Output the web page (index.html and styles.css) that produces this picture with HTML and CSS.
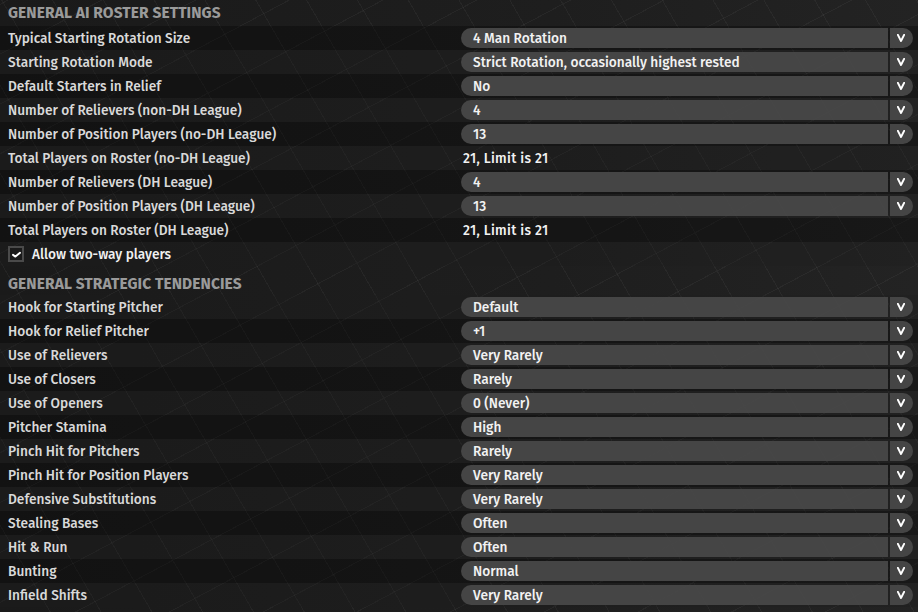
FILE: index.html
```html
<!DOCTYPE html>
<html>
<head>
<meta charset="utf-8">
<link rel="stylesheet" href="styles.css">
</head>
<body>
<div class="page">
  <div class="section-title">General AI Roster Settings</div>
  <div class="rows">
    <div class="row"><div class="label">Typical Starting Rotation Size</div><div class="select"><span class="val">4 Man Rotation</span><span class="arrow"><svg viewBox="0 0 8 8" width="8" height="8"><polyline points="0.8,0.8 4,7 7.2,0.8"/></svg></span></div></div>
    <div class="row"><div class="label">Starting Rotation Mode</div><div class="select"><span class="val">Strict Rotation, occasionally highest rested</span><span class="arrow"><svg viewBox="0 0 8 8" width="8" height="8"><polyline points="0.8,0.8 4,7 7.2,0.8"/></svg></span></div></div>
    <div class="row"><div class="label">Default Starters in Relief</div><div class="select"><span class="val">No</span><span class="arrow"><svg viewBox="0 0 8 8" width="8" height="8"><polyline points="0.8,0.8 4,7 7.2,0.8"/></svg></span></div></div>
    <div class="row"><div class="label">Number of Relievers (non-DH League)</div><div class="select"><span class="val">4</span><span class="arrow"><svg viewBox="0 0 8 8" width="8" height="8"><polyline points="0.8,0.8 4,7 7.2,0.8"/></svg></span></div></div>
    <div class="row"><div class="label">Number of Position Players (no-DH League)</div><div class="select"><span class="val">13</span><span class="arrow"><svg viewBox="0 0 8 8" width="8" height="8"><polyline points="0.8,0.8 4,7 7.2,0.8"/></svg></span></div></div>
    <div class="row"><div class="label">Total Players on Roster (no-DH League)</div><div class="static">21, Limit is 21</div></div>
    <div class="row"><div class="label">Number of Relievers (DH League)</div><div class="select"><span class="val">4</span><span class="arrow"><svg viewBox="0 0 8 8" width="8" height="8"><polyline points="0.8,0.8 4,7 7.2,0.8"/></svg></span></div></div>
    <div class="row"><div class="label">Number of Position Players (DH League)</div><div class="select"><span class="val">13</span><span class="arrow"><svg viewBox="0 0 8 8" width="8" height="8"><polyline points="0.8,0.8 4,7 7.2,0.8"/></svg></span></div></div>
    <div class="row"><div class="label">Total Players on Roster (DH League)</div><div class="static">21, Limit is 21</div></div>
    <div class="row check-row"><span class="checkbox"><svg viewBox="0 0 10 8" width="9" height="7"><polyline points="1,4.4 3.8,6.4 9,2"/></svg></span><span class="check-label">Allow two-way players</span></div>
  </div>

  <div class="section-title second">General Strategic Tendencies</div>
  <div class="rows alt">
    <div class="row"><div class="label">Hook for Starting Pitcher</div><div class="select"><span class="val">Default</span><span class="arrow"><svg viewBox="0 0 8 8" width="8" height="8"><polyline points="0.8,0.8 4,7 7.2,0.8"/></svg></span></div></div>
    <div class="row"><div class="label">Hook for Relief Pitcher</div><div class="select"><span class="val">+1</span><span class="arrow"><svg viewBox="0 0 8 8" width="8" height="8"><polyline points="0.8,0.8 4,7 7.2,0.8"/></svg></span></div></div>
    <div class="row"><div class="label">Use of Relievers</div><div class="select"><span class="val">Very Rarely</span><span class="arrow"><svg viewBox="0 0 8 8" width="8" height="8"><polyline points="0.8,0.8 4,7 7.2,0.8"/></svg></span></div></div>
    <div class="row"><div class="label">Use of Closers</div><div class="select"><span class="val">Rarely</span><span class="arrow"><svg viewBox="0 0 8 8" width="8" height="8"><polyline points="0.8,0.8 4,7 7.2,0.8"/></svg></span></div></div>
    <div class="row"><div class="label">Use of Openers</div><div class="select"><span class="val">0 (Never)</span><span class="arrow"><svg viewBox="0 0 8 8" width="8" height="8"><polyline points="0.8,0.8 4,7 7.2,0.8"/></svg></span></div></div>
    <div class="row"><div class="label">Pitcher Stamina</div><div class="select"><span class="val">High</span><span class="arrow"><svg viewBox="0 0 8 8" width="8" height="8"><polyline points="0.8,0.8 4,7 7.2,0.8"/></svg></span></div></div>
    <div class="row"><div class="label">Pinch Hit for Pitchers</div><div class="select"><span class="val">Rarely</span><span class="arrow"><svg viewBox="0 0 8 8" width="8" height="8"><polyline points="0.8,0.8 4,7 7.2,0.8"/></svg></span></div></div>
    <div class="row"><div class="label">Pinch Hit for Position Players</div><div class="select"><span class="val">Very Rarely</span><span class="arrow"><svg viewBox="0 0 8 8" width="8" height="8"><polyline points="0.8,0.8 4,7 7.2,0.8"/></svg></span></div></div>
    <div class="row"><div class="label">Defensive Substitutions</div><div class="select"><span class="val">Very Rarely</span><span class="arrow"><svg viewBox="0 0 8 8" width="8" height="8"><polyline points="0.8,0.8 4,7 7.2,0.8"/></svg></span></div></div>
    <div class="row"><div class="label">Stealing Bases</div><div class="select"><span class="val">Often</span><span class="arrow"><svg viewBox="0 0 8 8" width="8" height="8"><polyline points="0.8,0.8 4,7 7.2,0.8"/></svg></span></div></div>
    <div class="row"><div class="label">Hit &amp; Run</div><div class="select"><span class="val">Often</span><span class="arrow"><svg viewBox="0 0 8 8" width="8" height="8"><polyline points="0.8,0.8 4,7 7.2,0.8"/></svg></span></div></div>
    <div class="row"><div class="label">Bunting</div><div class="select"><span class="val">Normal</span><span class="arrow"><svg viewBox="0 0 8 8" width="8" height="8"><polyline points="0.8,0.8 4,7 7.2,0.8"/></svg></span></div></div>
    <div class="row"><div class="label">Infield Shifts</div><div class="select"><span class="val">Very Rarely</span><span class="arrow"><svg viewBox="0 0 8 8" width="8" height="8"><polyline points="0.8,0.8 4,7 7.2,0.8"/></svg></span></div></div>
  </div>
</div>
</body>
</html>
```

FILE: styles.css
```css
html, body {
  margin: 0;
  padding: 0;
}
body {
  width: 918px;
  height: 612px;
  overflow: hidden;
  background-color: #1c1c1c;
  background-image:
    repeating-linear-gradient(60deg, rgba(255,255,255,0) 0px, rgba(255,255,255,0) 43px, rgba(255,255,255,0.04) 43px, rgba(255,255,255,0.04) 44px),
    repeating-linear-gradient(-28deg, rgba(255,255,255,0) 0px, rgba(255,255,255,0) 43px, rgba(255,255,255,0.04) 43px, rgba(255,255,255,0.04) 44px),
    linear-gradient(90deg, #1a1a1a 0%, #1e1e1e 60%, #232323 100%);
  font-family: "Fira Sans", Roboto, "Liberation Sans", sans-serif;
  font-weight: 500;
  color: #d9d9d9;
}
.page {
  display: flex;
  flex-direction: column;
}
.section-title {
  height: 26px;
  line-height: 27px;
  padding-left: 8px;
  text-transform: uppercase;
  font-size: 15.5px;
  font-weight: 700;
  color: #9a9a9a;
  letter-spacing: 0.1px;
}
.section-title.second {
  margin-top: 3px;
  line-height: 30px;
}
.rows {
  display: flex;
  flex-direction: column;
}
.row {
  height: 24px;
  display: grid;
  grid-template-columns: 461px 452px;
  align-items: center;
  font-size: 13.7px;
}
.rows .row:nth-child(odd) {
  background: rgba(8, 8, 8, 0.4);
}
.rows .row:nth-child(even) {
  background: rgba(30, 30, 30, 0.3);
}
.rows.alt .row:nth-child(odd) {
  background: rgba(30, 30, 30, 0.3);
}
.rows.alt .row:nth-child(even) {
  background: rgba(8, 8, 8, 0.4);
}
.label {
  padding-left: 8px;
  white-space: nowrap;
  line-height: 23px;
}
.select {
  height: 20px;
  display: flex;
  align-items: stretch;
  color: #f2f2f2;
}
.val {
  flex: 1;
  background: rgba(72, 72, 72, 0.95);
  border-radius: 10px 0 0 10px;
  padding-left: 12px;
  line-height: 21px;
  white-space: nowrap;
}
.arrow {
  width: 22px;
  margin-left: 2px;
  background: rgba(72, 72, 72, 0.95);
  border-radius: 0 10px 10px 0;
  display: flex;
  align-items: center;
  justify-content: center;
  padding-right: 1px;
}
.arrow svg polyline {
  fill: none;
  stroke: #ffffff;
  stroke-width: 1.9;
  stroke-linecap: round;
  stroke-linejoin: round;
}
.static {
  padding-left: 2px;
  color: #f2f2f2;
  letter-spacing: 0.3px;
}
.check-row {
  display: flex;
  align-items: center;
  padding-left: 8px;
}
.checkbox {
  width: 12px;
  height: 12px;
  border: 2px solid #4a4a4a;
  background: #1a1a1a;
  display: flex;
  align-items: center;
  justify-content: center;
}
.checkbox polyline {
  fill: none;
  stroke: #ffffff;
  stroke-width: 2.2;
  stroke-linecap: round;
  stroke-linejoin: round;
}
.check-label {
  margin-left: 8px;
  color: #f0f0f0;
  font-weight: 500;
}
```
